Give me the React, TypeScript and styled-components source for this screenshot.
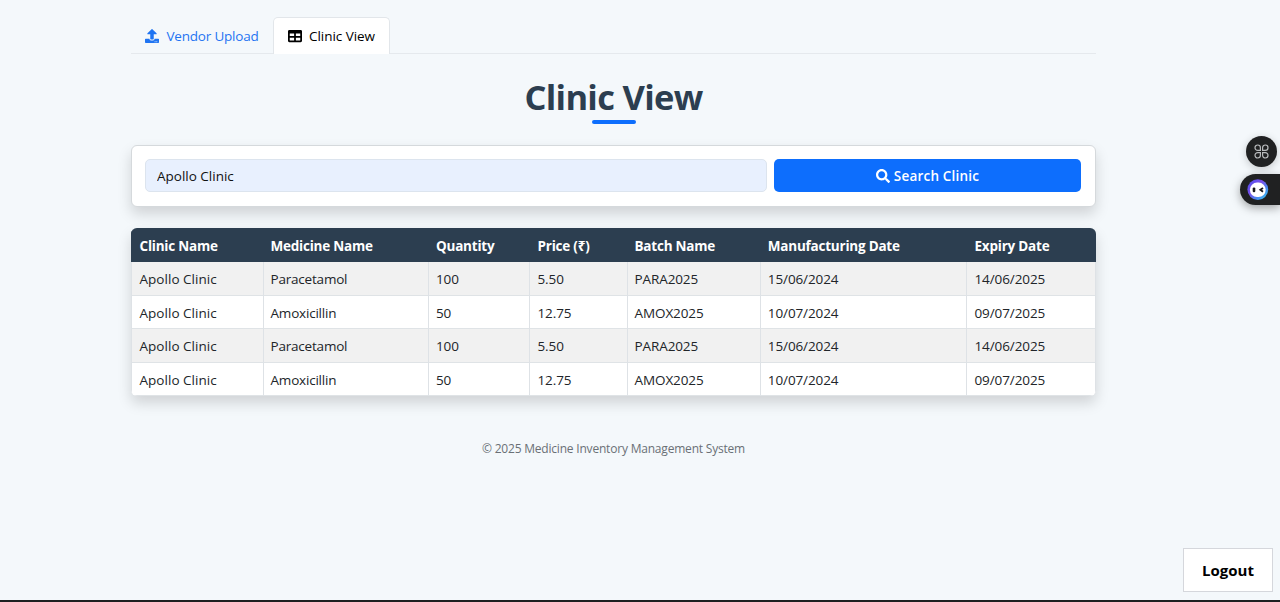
import React from "react";
import styled, { createGlobalStyle } from "styled-components";
import { FaSearch, FaTable, FaUpload } from "react-icons/fa";

const GlobalStyle = createGlobalStyle`
  * { box-sizing: border-box; }
  body {
    margin: 0;
    background: #f4f8fb;
    color: #212529;
    font-family: "Open Sans", "Noto Sans", sans-serif;
    font-size: 13.5px;
    line-height: 20px;
    overflow: hidden;
  }
`;

const Page = styled.div`
  height: 602px;
  padding: 17px 184px 0 131px;
`;

const Tabs = styled.nav`
  display: flex;
  height: 37px;
  border-bottom: 1px solid #e5e9ed;
`;

const Tab = styled.a<{ $active?: boolean; $width: number; $spacing: number }>`
  display: flex;
  align-items: center;
  gap: ${(p) => (p.$active ? 7 : 7.5)}px;
  width: ${(p) => p.$width}px;
  height: 37px;
  padding: 0 0 0 ${(p) => (p.$active ? 14 : 13)}px;
  white-space: nowrap;
  letter-spacing: ${(p) => p.$spacing}px;
  color: ${(p) => (p.$active ? "#000" : "#1f74f2")};
  background: ${(p) => (p.$active ? "#fff" : "transparent")};
  border: 1px solid ${(p) => (p.$active ? "#e2e6ea" : "transparent")};
  border-bottom: 0;
  border-radius: 5px 5px 0 0;
  svg { flex: none; width: 14px; height: 14px; }
`;

const Heading = styled.header`
  display: flex;
  flex-direction: column;
  align-items: center;
  height: 91px;
  padding-top: 22px;
`;

const Title = styled.h1`
  margin: 0;
  font-size: 34.5px;
  line-height: 42px;
  font-weight: 700;
  letter-spacing: -0.7px;
  color: #2c3e50;
`;

const Underline = styled.div`
  width: 44px;
  height: 4px;
  margin-top: 2px;
  border-radius: 2px;
  background: #0d6efd;
`;

const SearchCard = styled.form`
  display: flex;
  gap: 7px;
  height: 62px;
  padding: 13px 14px 13px 13px;
  background: #fff;
  border: 1px solid #d5d9dc;
  border-radius: 6px;
  box-shadow: 0 7px 14px rgba(0, 0, 0, 0.15);
`;

const ClinicInput = styled.input`
  width: 622px;
  height: 33px;
  padding: 0 11px 0 11px;
  font: inherit;
  letter-spacing: 0;
  color: #111;
  background: #e8f0fe;
  border: 1px solid #dce4ee;
  border-radius: 5px;
  outline: none;
`;

const SearchButton = styled.button`
  display: flex;
  flex: 1;
  align-items: center;
  justify-content: center;
  gap: 4px;
  height: 33px;
  padding: 0;
  font: inherit;
  font-weight: 600;
  letter-spacing: 0.2px;
  color: #fff;
  background: #0d6efd;
  border: 0;
  border-radius: 5px;
  svg { width: 14px; height: 14px; }
`;

const TableCard = styled.div`
  height: 168px;
  margin-top: 21px;
  overflow: hidden;
  border-radius: 6px;
  box-shadow: 0 7px 14px rgba(0, 0, 0, 0.15), 0 0 0 1px #d9dde0 inset;
`;

const Table = styled.table`
  width: 100%;
  table-layout: fixed;
  border-collapse: separate;
  border-spacing: 0;
`;

const HeadCell = styled.th<{ $inset: number }>`
  height: 34px;
  padding: 2px 0 0 ${(p) => p.$inset}px;
  text-align: left;
  font-weight: 700;
  letter-spacing: -0.22px;
  white-space: nowrap;
  color: #fff;
  background: #2c3e50;
  border-left: 1px solid #2c3e50;
`;

const Row = styled.tr`
  height: 33.5px;
  background: #fff;
  &:nth-child(odd) { background: #f1f1f1; }
`;

const Cell = styled.td<{ $inset: number }>`
  height: 33.5px;
  padding: 2px 0 0 ${(p) => p.$inset}px;
  white-space: nowrap;
  letter-spacing: -0.1px;
  border-left: 1px solid #dee2e6;
  border-bottom: 1px solid #dfe3e6;
  &:first-child { letter-spacing: 0.03px; }
  &:nth-child(2) { letter-spacing: -0.2px; }
  &:last-child { border-right: 1px solid #dee2e6; }
`;

const Footer = styled.footer`
  margin-top: 43px;
  text-align: center;
  font-size: 12px;
  line-height: 20px;
  letter-spacing: -0.2px;
  color: #6a7076;
`;

const Logout = styled.button`
  position: fixed;
  right: 7px;
  bottom: 10px;
  width: 90px;
  height: 44px;
  padding: 0;
  font: 700 15px/20px "Open Sans", sans-serif;
  color: #000;
  background: #fff;
  border: 1px solid #d5d7dc;
`;

const AppsBubble = styled.div`
  position: fixed;
  top: 136px;
  right: 3px;
  display: grid;
  place-items: center;
  width: 31px;
  height: 31px;
  border-radius: 50%;
  background: #202122;
  box-shadow: 0 2px 8px rgba(0, 0, 0, 0.2);
`;

const AssistantPill = styled.div`
  position: fixed;
  top: 174px;
  right: 0;
  display: flex;
  align-items: center;
  width: 40px;
  height: 31px;
  padding-left: 7px;
  border-radius: 16px 0 0 16px;
  background: #202122;
  box-shadow: 0 3px 10px rgba(0, 0, 0, 0.35);
`;

const ScreenEdge = styled.div`
  position: fixed;
  left: 0;
  right: 0;
  bottom: 0;
  height: 2px;
  background: #1d1f20;
`;

const columns = [
  { label: "Clinic Name", width: 132, inset: 7.5 },
  { label: "Medicine Name", width: 165, inset: 6.5 },
  { label: "Quantity", width: 101, inset: 7 },
  { label: "Price (₹)", width: 98, inset: 7.5 },
  { label: "Batch Name", width: 133, inset: 6.5 },
  { label: "Manufacturing Date", width: 206, inset: 6.8 },
  { label: "Expiry Date", width: 130, inset: 7.5 },
];

const stock = [
  ["Apollo Clinic", "Paracetamol", "100", "5.50", "PARA2025", "15/06/2024", "14/06/2025"],
  ["Apollo Clinic", "Amoxicillin", "50", "12.75", "AMOX2025", "10/07/2024", "09/07/2025"],
];
const rows = [...stock, ...stock];

const CloverIcon = () => (
  <svg width="15" height="15" viewBox="0 0 15 15" fill="none" stroke="#b9bbbd" strokeWidth="1.2">
    <path d="M6.4 6.4H3.7A2.7 2.7 0 1 1 6.4 3.7ZM8.6 6.4V3.7A2.7 2.7 0 1 1 11.3 6.4ZM6.4 8.6V11.3A2.7 2.7 0 1 1 3.7 8.6ZM8.6 8.6H11.3A2.7 2.7 0 1 1 8.6 11.3Z" />
  </svg>
);

const AssistantIcon = () => (
  <svg width="22" height="22" viewBox="0 0 22 22">
    <defs>
      <linearGradient id="ring" x1="0" y1="0" x2="1" y2="1">
        <stop offset="0" stopColor="#4a50ee" />
        <stop offset="0.4" stopColor="#7950ea" />
        <stop offset="0.7" stopColor="#478df0" />
        <stop offset="1" stopColor="#36d6ee" />
      </linearGradient>
    </defs>
    <circle cx="10.8" cy="10.6" r="10.4" fill="url(#ring)" />
    <rect x="2.9" y="3.6" width="15.8" height="14.4" rx="7.2" fill="#fff" />
    <rect x="5.7" y="8.4" width="2.6" height="4.8" rx="1.2" fill="#17181c" />
    <path d="M16 8.9 13.3 10.8l2.7 2" fill="none" stroke="#17181c" strokeWidth="1.8" />
  </svg>
);

export default function App() {
  return (
    <>
      <GlobalStyle />
      <Page>
        <Tabs>
          <Tab $width={142} $spacing={-0.2}>
            <FaUpload />
            Vendor Upload
          </Tab>
          <Tab $active $width={117} $spacing={-0.05}>
            <FaTable />
            Clinic View
          </Tab>
        </Tabs>
        <Heading>
          <Title>Clinic View</Title>
          <Underline />
        </Heading>
        <SearchCard onSubmit={(e) => e.preventDefault()}>
          <ClinicInput defaultValue="Apollo Clinic" aria-label="Clinic name" />
          <SearchButton>
            <FaSearch />
            Search Clinic
          </SearchButton>
        </SearchCard>
        <TableCard>
          <Table>
            <colgroup>
              {columns.map((c) => (
                <col key={c.label} width={c.width} />
              ))}
            </colgroup>
            <thead>
              <tr>
                {columns.map((c) => (
                  <HeadCell key={c.label} $inset={c.inset}>
                    {c.label}
                  </HeadCell>
                ))}
              </tr>
            </thead>
            <tbody>
              {rows.map((row, i) => (
                <Row key={i}>
                  {row.map((value, j) => (
                    <Cell key={value} $inset={columns[j].inset}>
                      {value}
                    </Cell>
                  ))}
                </Row>
              ))}
            </tbody>
          </Table>
        </TableCard>
        <Footer>© 2025 Medicine Inventory Management System</Footer>
      </Page>
      <AppsBubble>
        <CloverIcon />
      </AppsBubble>
      <AssistantPill>
        <AssistantIcon />
      </AssistantPill>
      <Logout>Logout</Logout>
      <ScreenEdge />
    </>
  );
}
